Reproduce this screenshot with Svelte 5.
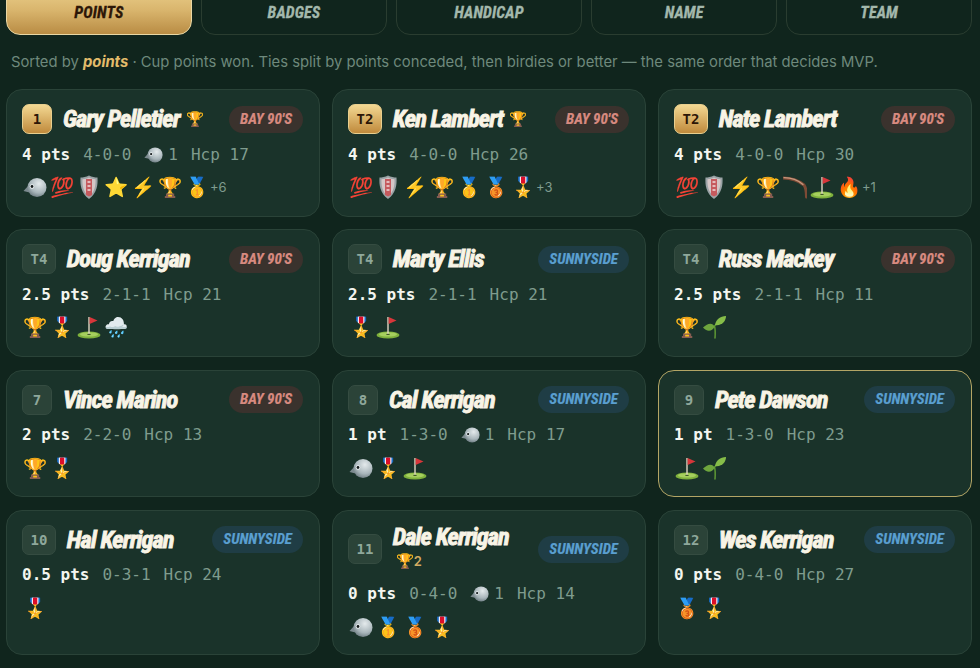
<script>
  const tabs = ['Points', 'Badges', 'Handicap', 'Name', 'Team'];

  const players = [
    { rank: '1', gold: true, name: 'Gary Pelletier', cups: 1, team: 'bay', pts: '4 pts', rec: '4-0-0', duck: 1, hcp: 17, badges: ['helmet', '💯', 'shield', '⭐', '⚡', '🏆', '🥇'], more: 6 },
    { rank: 'T2', gold: true, name: 'Ken Lambert', cups: 1, team: 'bay', pts: '4 pts', rec: '4-0-0', hcp: 26, badges: ['💯', 'shield', '⚡', '🏆', '🥇', '🥉', '🎖️'], more: 3 },
    { rank: 'T2', gold: true, name: 'Nate Lambert', team: 'bay', pts: '4 pts', rec: '4-0-0', hcp: 30, badges: ['💯', 'shield', '⚡', '🏆', 'boomerang', 'flag', '🔥'], more: 1 },
    { rank: 'T4', name: 'Doug Kerrigan', team: 'bay', pts: '2.5 pts', rec: '2-1-1', hcp: 21, badges: ['🏆', '🎖️', 'flag', '🌧️'] },
    { rank: 'T4', name: 'Marty Ellis', team: 'sun', pts: '2.5 pts', rec: '2-1-1', hcp: 21, badges: ['🎖️', 'flag'] },
    { rank: 'T4', name: 'Russ Mackey', team: 'bay', pts: '2.5 pts', rec: '2-1-1', hcp: 11, badges: ['🏆', 'sprout'] },
    { rank: '7', name: 'Vince Marino', team: 'bay', pts: '2 pts', rec: '2-2-0', hcp: 13, badges: ['🏆', '🎖️'] },
    { rank: '8', name: 'Cal Kerrigan', team: 'sun', pts: '1 pt', rec: '1-3-0', duck: 1, hcp: 17, badges: ['helmet', '🎖️', 'flag'] },
    { rank: '9', name: 'Pete Dawson', team: 'sun', pts: '1 pt', rec: '1-3-0', hcp: 23, badges: ['flag', 'sprout'], me: true },
    { rank: '10', name: 'Hal Kerrigan', team: 'sun', pts: '0.5 pts', rec: '0-3-1', hcp: 24, badges: ['🎖️'] },
    { rank: '11', name: 'Dale Kerrigan', cups: 2, team: 'sun', pts: '0 pts', rec: '0-4-0', duck: 1, hcp: 14, badges: ['helmet', '🥇', '🥉', '🎖️'] },
    { rank: '12', name: 'Wes Kerrigan', team: 'sun', pts: '0 pts', rec: '0-4-0', hcp: 27, badges: ['🥉', '🎖️'] }
  ];

  const teamNames = { bay: "Bay 90's", sun: 'Sunnyside' };
</script>

{#snippet helmet(size)}
  <svg class="glyph" width={size} height={size} viewBox="0 0 24 24">
    <defs>
      <radialGradient id="shell" cx="0.6" cy="0.3" r="0.8">
        <stop offset="0" stop-color="#e4eaec" />
        <stop offset="0.6" stop-color="#a8b5ba" />
        <stop offset="1" stop-color="#5f6e74" />
      </radialGradient>
    </defs>
    <path d="M0.5 16 L5.500 10.500 L6.500 17.500 Z" fill="#7c8a8f" />
    <circle cx="14" cy="12.500" r="9.500" fill="url(#shell)" />
    <circle cx="9" cy="11.500" r="2.300" fill="#eef2f3" />
    <circle cx="9" cy="11.500" r="1.400" fill="#141a1c" />
  </svg>
{/snippet}

{#snippet shield()}
  <svg class="glyph" width="24" height="24" viewBox="0 0 24 24">
    <path d="M12 .5 C15 2 18 2.500 20.500 2.500 C21 10 20 18 12 24 C4 18 3 10 3.500 2.500 C6 2.500 9 2 12 .5 Z" fill="#9aa3a6" />
    <path d="M12 2.500 C14 3.500 16 4 18.500 4.300 C18.800 10 18 17 12 21.600 C6 17 5.200 10 5.500 4.300 C8 4 10 3.500 12 2.500 Z" fill="#d4c6c6" />
    <path d="M9 4 L15 4 L15 20 L12 21.600 L9 20 Z" fill="#c65a5e" />
    <path d="M10.500 7 H13.500 M10.500 11 H13.500 M10.500 15 H13.500" stroke="#f0dcdc" stroke-width="1.400" />
  </svg>
{/snippet}

{#snippet flag()}
  <svg class="glyph" width="24" height="24" viewBox="0 0 24 24">
    <ellipse cx="12" cy="20" rx="11.500" ry="3.600" fill="#7fb23c" />
    <ellipse cx="12" cy="19.400" rx="9" ry="2.200" fill="#a6cf5e" />
    <path d="M12 2 V19" stroke="#e2d8c4" stroke-width="1.400" />
    <path d="M12.600 2 L20.500 5.500 L12.600 9 Z" fill="#d8363a" />
    <ellipse cx="12" cy="19.400" rx="1.800" ry=".7" fill="#3f5a25" />
  </svg>
{/snippet}

{#snippet boomerang()}
  <svg class="glyph" width="24" height="24" viewBox="0 0 24 24">
    <path d="M0 3 C8 3 16 6 21 10 C23 13 23.500 18 23.500 22" fill="none" stroke="#7d4a35" stroke-width="3" stroke-linecap="round" />
    <path d="M1 2.600 C8 2.600 15.500 5.500 20 9.500" fill="none" stroke="#c79a80" stroke-width="1.200" stroke-linecap="round" />
  </svg>
{/snippet}

{#snippet sprout()}
  <svg class="glyph" width="24" height="24" viewBox="0 0 24 24">
    <path d="M13 23 C13.500 17 13 13 12.500 11 C15 9 16 7 19 4" fill="none" stroke="#5f9a35" stroke-width="1.500" stroke-linecap="round" />
    <path d="M12.500 12 C11 7.500 6 7.500 1 12.500 C4 16.500 10 17 12.500 12 Z" fill="#6ea63d" />
    <path d="M13 10 C14 4 18 1.500 24 1 C24 6 20 11 13 10 Z" fill="#86bd49" />
  </svg>
{/snippet}

<div class="page">
  <nav class="tabs">
    {#each tabs as t, i}
      <button class="tab" class:active={i === 0}>{t}</button>
    {/each}
  </nav>

  <p class="note">Sorted by <em>points</em> · Cup points won. Ties split by points conceded, then birdies or better — the same order that decides MVP.</p>

  <div class="grid">
    {#each players as p}
      <div class="card" class:me={p.me}>
        <div class="head">
          <span class="rank" class:gold={p.gold}>{p.rank}</span>
          <div class="who" class:stack={p.cups > 1}>
            <span class="name">{p.name}</span>
            {#if p.cups}
              <span class="cup">🏆{#if p.cups > 1}<b>{p.cups}</b>{/if}</span>
            {/if}
          </div>
          <span class="team {p.team}">{teamNames[p.team]}</span>
        </div>

        <div class="stats">
          <strong>{p.pts}</strong>
          <span>{p.rec}</span>
          {#if p.duck}
            <span class="duck">{@render helmet(19)}{p.duck}</span>
          {/if}
          <span>Hcp {p.hcp}</span>
        </div>

        <div class="badges">
          {#each p.badges as b}
            {#if b === 'helmet'}
              {@render helmet(24)}
            {:else if b === 'shield'}
              {@render shield()}
            {:else if b === 'flag'}
              {@render flag()}
            {:else if b === 'boomerang'}
              {@render boomerang()}
            {:else if b === 'sprout'}
              {@render sprout()}
            {:else}
              <span class="emoji">{b}</span>
            {/if}
          {/each}
          {#if p.more}
            <span class="more">+{p.more}</span>
          {/if}
        </div>
      </div>
    {/each}
  </div>
</div>

<style>
  :global(body) {
    background: #10251d;
  }

  .page {
    height: 668px;
    overflow: hidden;
    font-family: Inter, sans-serif;
    box-sizing: border-box;
    padding: 0 8px 0 6px;
  }

  .tabs {
    display: flex;
    gap: 9.5px;
    margin-top: -20px;
  }

  .tab {
    flex: 1;
    height: 55px;
    padding: 10px 0 0;
    background: transparent;
    border: 1.5px solid #2a3d30;
    border-radius: 14px;
    color: #a3b8ac;
    font-family: "Roboto Condensed", "Liberation Sans Narrow", sans-serif;
    font-size: 16px;
    font-style: italic;
    font-weight: 700;
    letter-spacing: 0.15px;
    -webkit-text-stroke: 0.3px currentColor;
    text-transform: uppercase;
  }

  .tab.active {
    background: linear-gradient(180deg, #f0d794 0%, #d9b56d 55%, #b98c44 100%);
    border-color: #e9d7a4;
    color: #2c1607;
  }

  .note {
    margin: 18px 0 0 5px;
    height: 36px;
    font-size: 14.8px;
    line-height: 18px;
    color: #6e897c;
    white-space: nowrap;
  }

  .note em {
    color: #e3bc6b;
    font-weight: 700;
  }

  .grid {
    display: grid;
    grid-template-columns: repeat(3, 1fr);
    gap: 12.8px 12px;
  }

  .card {
    display: flex;
    flex-direction: column;
    gap: 10px;
    min-height: 127.5px;
    box-sizing: border-box;
    padding: 14px 16px 14px 15px;
    background: #1a332a;
    border: 1.5px solid #2a4338;
    border-radius: 16px;
  }

  .card.me {
    border-color: #b3a565;
  }

  .head {
    display: flex;
    align-items: center;
    gap: 11px;
  }

  .rank {
    display: flex;
    align-items: center;
    justify-content: center;
    flex: none;
    min-width: 30px;
    height: 30px;
    padding: 0 7.5px;
    box-sizing: border-box;
    background: #2b4338;
    border: 1px solid #354c41;
    border-radius: 7px;
    color: #8fa89b;
    font-family: "DejaVu Sans Mono", monospace;
    font-size: 14px;
    font-weight: 700;
  }

  .rank.gold {
    background: linear-gradient(180deg, #f3d892 0%, #c08a3c 100%);
    border-color: #e9cf8e;
    color: #2c1607;
  }

  .who {
    display: flex;
    align-items: center;
    gap: 6px;
    flex: 1;
    min-width: 0;
  }

  .who.stack {
    flex-direction: column;
    align-items: flex-start;
    gap: 0;
  }

  .name {
    color: #f8f4e6;
    font-family: "Roboto Condensed", "Liberation Sans Narrow", sans-serif;
    font-size: 24.5px;
    font-style: italic;
    font-weight: 700;
    line-height: 28px;
    letter-spacing: -0.95px;
    -webkit-text-stroke: 0.85px #f8f4e6;
    text-shadow: 0 1px 1px rgba(0, 0, 0, 0.4);
    white-space: nowrap;
  }

  .cup {
    font-size: 14.5px;
    line-height: 20px;
  }

  .stack .name {
    line-height: 23px;
  }

  .stack .cup {
    line-height: 26px;
    padding-left: 3px;
  }

  .cup b {
    color: #d3ab62;
    font-size: 13px;
    font-weight: 600;
  }

  .team {
    flex: none;
    padding: 0 11px;
    height: 27px;
    line-height: 27px;
    border-radius: 14px;
    font-family: "Roboto Condensed", "Liberation Sans Narrow", sans-serif;
    font-size: 15px;
    font-style: italic;
    font-weight: 700;
    -webkit-text-stroke: 0.2px currentColor;
    text-transform: uppercase;
  }

  .team.bay {
    background: #3a322d;
    color: #d88a80;
  }

  .team.sun {
    background: #1f3d45;
    color: #5a9fd0;
  }

  .stats {
    display: flex;
    align-items: center;
    gap: 13px;
    height: 20px;
    color: #7f9c8e;
    font-family: "DejaVu Sans Mono", monospace;
    font-size: 16px;
    white-space: nowrap;
  }

  .stats strong {
    color: #f4f6f0;
    font-weight: 700;
  }

  .duck {
    display: flex;
    align-items: center;
    gap: 5px;
  }

  .badges {
    display: flex;
    align-items: center;
    gap: 3px;
    height: 26px;
    padding-left: 1px;
  }

  .emoji {
    font-size: 19.5px;
    line-height: 24px;
  }

  .glyph {
    flex: none;
  }

  .more {
    margin-left: -2px;
    color: #7f9c8e;
    font-size: 13px;
  }
</style>
